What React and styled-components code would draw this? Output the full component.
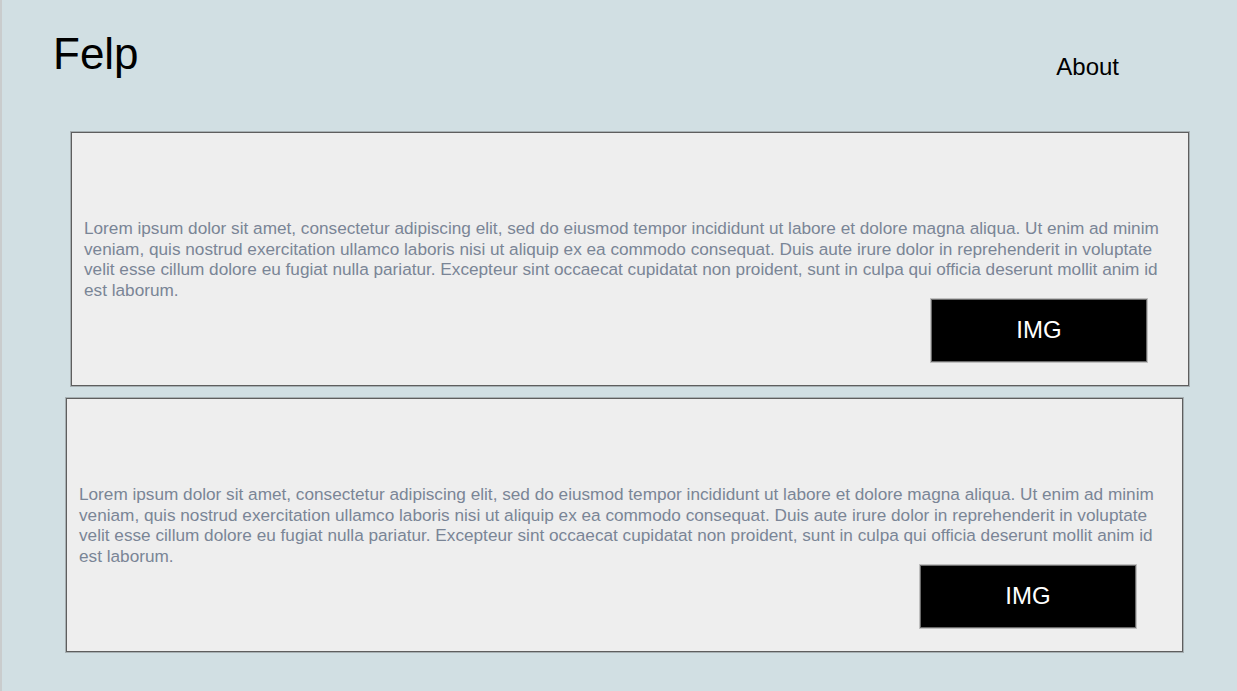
import React from "react";
import styled, { createGlobalStyle } from "styled-components";

const GlobalStyle = createGlobalStyle`
  html, body {
    margin: 0;
    padding: 0;
  }
  body {
    font-family: "Liberation Sans", Arial, sans-serif;
    background-color: #d1dfe3;
  }
  * {
    box-sizing: border-box;
  }
`;

const lorem =
  "Lorem ipsum dolor sit amet, consectetur adipiscing elit, sed do eiusmod tempor incididunt ut labore et dolore magna aliqua. Ut enim ad minim veniam, quis nostrud exercitation ullamco laboris nisi ut aliquip ex ea commodo consequat. Duis aute irure dolor in reprehenderit in voluptate velit esse cillum dolore eu fugiat nulla pariatur. Excepteur sint occaecat cupidatat non proident, sunt in culpa qui officia deserunt mollit anim id est laborum.";

const posts = [
  { id: 1, left: 69, width: 1118, imgRight: 41 },
  { id: 2, left: 64, width: 1117, imgRight: 46 },
];

function App() {
  return (
    <>
      <GlobalStyle />
      <Page>
        <Header>
          <Logo>Felp</Logo>
          <NavLink>About</NavLink>
        </Header>
        <Feed>
          {posts.map((post) => (
            <Card key={post.id} $left={post.left} $width={post.width}>
              <CardText>{lorem}</CardText>
              <ImgBox $right={post.imgRight}>IMG</ImgBox>
            </Card>
          ))}
        </Feed>
      </Page>
    </>
  );
}

export default App;

const Page = styled.div`
  min-height: 100vh;
  border-left: 2px solid #c9cccd;
  background-color: #d1dfe3;
  padding-bottom: 38px;
`;

const Header = styled.div`
  display: flex;
  justify-content: space-between;
  align-items: flex-start;
  padding: 29px 118px 0 51px;
`;

const Logo = styled.div`
  font-size: 44px;
  color: #000;
`;

const NavLink = styled.div`
  margin-top: 24px;
  font-size: 24px;
  color: #000;
  cursor: pointer;
`;

const Feed = styled.div`
  display: flex;
  flex-direction: column;
  gap: 12px;
  margin-top: 51px;
`;

const Card = styled.div`
  width: ${(props) => props.$width}px;
  margin-left: ${(props) => props.$left}px;
  display: flex;
  flex-direction: column;
  padding: 85px 14px 23px 12px;
  background-color: #eeeeee;
  border: 1px solid #5e5e5e;
  box-shadow: 0 0 0 1px rgba(90, 90, 90, 0.35);
`;

const CardText = styled.p`
  margin: 0;
  font-size: 17.2px;
  line-height: 20.7px;
  color: #7a8596;
`;

const ImgBox = styled.div`
  align-self: flex-end;
  margin-top: -2px;
  margin-right: ${(props) => props.$right - 14}px;
  width: 216px;
  height: 63px;
  display: flex;
  align-items: center;
  justify-content: center;
  background-color: #000;
  border: 1px solid #6a6a6a;
  box-shadow: 0 0 0 1px rgba(120, 120, 120, 0.4);
  color: #fff;
  font-size: 24px;
`;
